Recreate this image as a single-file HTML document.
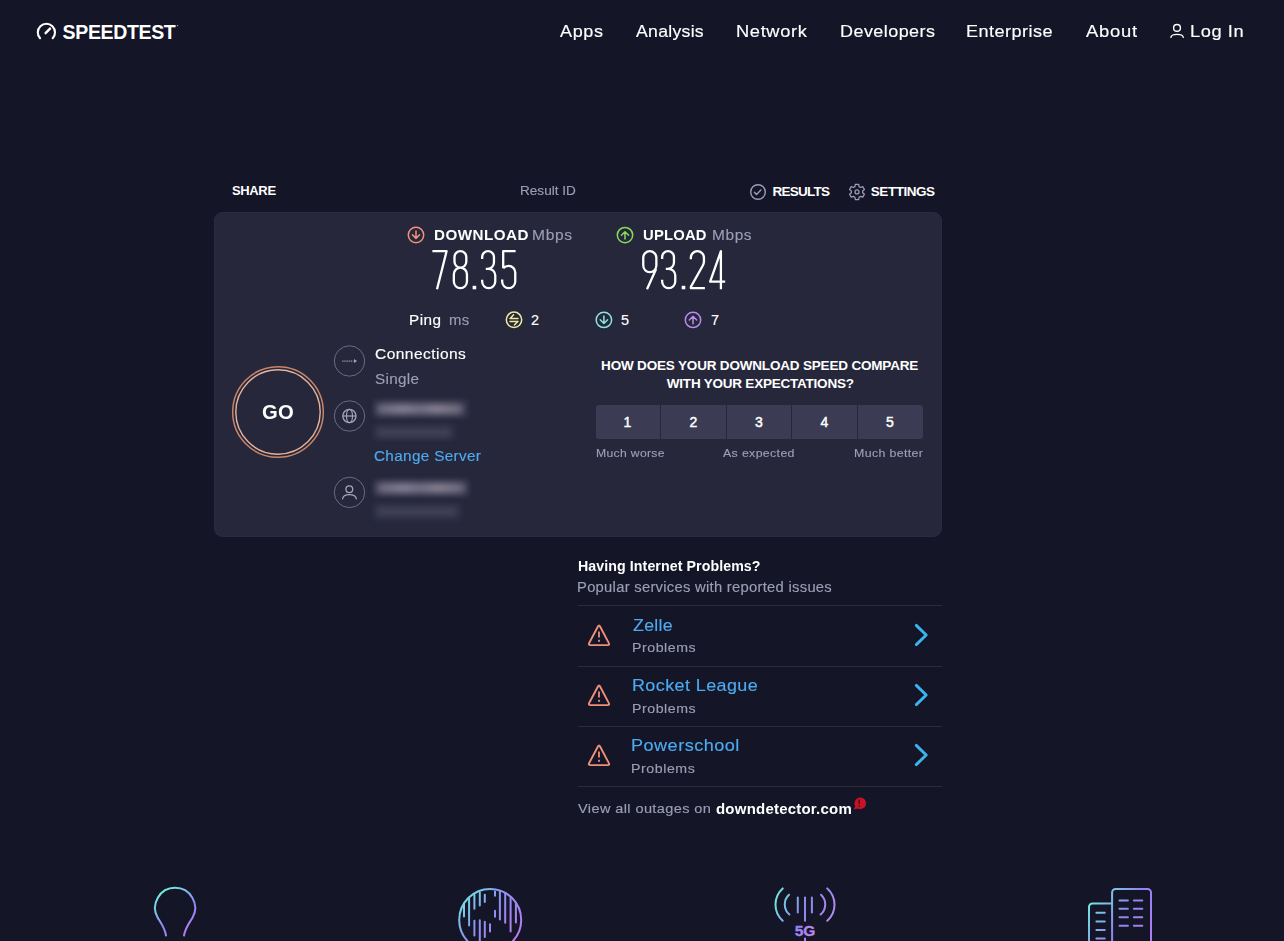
<!DOCTYPE html>
<html><head><meta charset="utf-8">
<style>
html,body{margin:0;padding:0}
body{width:1284px;height:941px;overflow:hidden;background:#141526;position:relative;font-family:"Liberation Sans",sans-serif}
.t{position:absolute;white-space:nowrap}
.t.r{-webkit-text-stroke:0.15px currentColor}
.card{position:absolute;left:214px;top:212px;width:728px;height:325px;border-radius:9px;background:#26273b;box-shadow:inset 0 0 0 1px #2a2b40}
.rate{position:absolute;left:596px;top:405px;width:327px;height:34px;border-radius:3px;background:#3b3c53;overflow:hidden}
.rate i{position:absolute;top:0;width:1px;height:34px;background:#26273b}
.hl{position:absolute;left:578px;width:364px;height:1px;background:#2b2c40}
.blur{position:absolute;filter:blur(2.6px);white-space:nowrap}
svg{position:absolute;left:0;top:0}
</style></head><body>
<div class="card"></div>
<div class="rate"><i style="left:64px"></i><i style="left:130px"></i><i style="left:195px"></i><i style="left:261px"></i></div>
<div class="hl" style="top:605px"></div>
<div class="hl" style="top:666px"></div>
<div class="hl" style="top:726px"></div>
<div class="hl" style="top:786px"></div>
<div class="blur" style="left:373px;top:399px;width:96px;height:19px;background:#2f2f45;filter:blur(2px)"></div>
<div class="blur" style="left:377px;top:404px;width:86px;height:10px;background:linear-gradient(90deg,#6e6b80,#8a8599 30%,#76748a 50%,#8e8696 70%,#6e6b80);filter:blur(3.5px)"></div>
<div class="blur" style="left:373px;top:423px;width:83px;height:17px;background:#2c2d42;filter:blur(2px)"></div>
<div class="blur" style="left:377px;top:428px;width:74px;height:9px;background:#414257;filter:blur(3px)"></div>
<div class="blur" style="left:373px;top:479px;width:97px;height:18px;background:#2f2f45;filter:blur(2px)"></div>
<div class="blur" style="left:377px;top:483px;width:88px;height:10px;background:linear-gradient(90deg,#6e6b80,#8a8599 30%,#76748a 50%,#8e8696 70%,#6e6b80);filter:blur(3.5px)"></div>
<div class="blur" style="left:373px;top:502px;width:89px;height:19px;background:#2c2d42;filter:blur(2px)"></div>
<div class="blur" style="left:377px;top:507px;width:80px;height:9px;background:#414257;filter:blur(3px)"></div>
<div class="t" style="left:62.6px;top:23.0px;font-size:19.5px;line-height:19.5px;font-weight:bold;color:#ffffff;letter-spacing:-0.35px;transform:scaleX(1.0000);transform-origin:0 0">SPEEDTEST</div>
<div class="t r" style="left:559.5px;top:23.0px;font-size:17px;line-height:17px;font-weight:normal;color:#ffffff;letter-spacing:0.60px;transform:scaleX(1.0611);transform-origin:0 0">Apps</div>
<div class="t r" style="left:635.8px;top:23.0px;font-size:17px;line-height:17px;font-weight:normal;color:#ffffff;letter-spacing:0.27px;transform:scaleX(1.0385);transform-origin:0 0">Analysis</div>
<div class="t r" style="left:735.6px;top:23.0px;font-size:17px;line-height:17px;font-weight:normal;color:#ffffff;letter-spacing:0.59px;transform:scaleX(1.0752);transform-origin:0 0">Network</div>
<div class="t r" style="left:839.5px;top:23.0px;font-size:17px;line-height:17px;font-weight:normal;color:#ffffff;letter-spacing:0.42px;transform:scaleX(1.0580);transform-origin:0 0">Developers</div>
<div class="t r" style="left:966.3px;top:23.0px;font-size:17px;line-height:17px;font-weight:normal;color:#ffffff;letter-spacing:0.42px;transform:scaleX(1.0642);transform-origin:0 0">Enterprise</div>
<div class="t r" style="left:1085.6px;top:23.0px;font-size:17px;line-height:17px;font-weight:normal;color:#ffffff;letter-spacing:0.70px;transform:scaleX(1.0824);transform-origin:0 0">About</div>
<div class="t r" style="left:1189.9px;top:23.0px;font-size:17px;line-height:17px;font-weight:normal;color:#ffffff;letter-spacing:0.52px;transform:scaleX(1.0743);transform-origin:0 0">Log In</div>
<div class="t" style="left:232.0px;top:184.0px;font-size:13px;line-height:13px;font-weight:bold;color:#ffffff;letter-spacing:-0.36px;transform:scaleX(1.0000);transform-origin:0 0">SHARE</div>
<div class="t r" style="left:519.8px;top:184.0px;font-size:13.5px;line-height:13.5px;font-weight:normal;color:#9c9eb5;letter-spacing:0.02px;transform:scaleX(1.0043);transform-origin:0 0">Result ID</div>
<div class="t" style="left:772.6px;top:185.0px;font-size:13.5px;line-height:13.5px;font-weight:bold;color:#ffffff;letter-spacing:-0.78px;transform:scaleX(1.0000);transform-origin:0 0">RESULTS</div>
<div class="t" style="left:870.8px;top:185.0px;font-size:13.5px;line-height:13.5px;font-weight:bold;color:#ffffff;letter-spacing:-0.46px;transform:scaleX(1.0000);transform-origin:0 0">SETTINGS</div>
<div class="t" style="left:434.0px;top:228.0px;font-size:14.5px;line-height:14.5px;font-weight:bold;color:#ffffff;letter-spacing:0.45px;transform:scaleX(1.0470);transform-origin:0 0">DOWNLOAD</div>
<div class="t r" style="left:532.4px;top:228.0px;font-size:14.5px;line-height:14.5px;font-weight:normal;color:#9c9eb5;letter-spacing:0.63px;transform:scaleX(1.0722);transform-origin:0 0">Mbps</div>
<div class="t" style="left:643.0px;top:228.0px;font-size:14.5px;line-height:14.5px;font-weight:bold;color:#ffffff;letter-spacing:0.20px;transform:scaleX(1.0204);transform-origin:0 0">UPLOAD</div>
<div class="t r" style="left:711.5px;top:228.0px;font-size:14.5px;line-height:14.5px;font-weight:normal;color:#9c9eb5;letter-spacing:0.56px;transform:scaleX(1.0642);transform-origin:0 0">Mbps</div>
<div class="t r" style="left:408.6px;top:313.0px;font-size:14.5px;line-height:14.5px;font-weight:normal;color:#ffffff;letter-spacing:0.40px;transform:scaleX(1.0559);transform-origin:0 0">Ping</div>
<div class="t r" style="left:448.6px;top:313.0px;font-size:14.5px;line-height:14.5px;font-weight:normal;color:#9c9eb5;letter-spacing:0.36px;transform:scaleX(1.0237);transform-origin:0 0">ms</div>
<div class="t r" style="left:531.0px;top:313.0px;font-size:14.5px;line-height:14.5px;font-weight:normal;color:#ffffff;letter-spacing:0.00px;transform:scaleX(1.0000);transform-origin:0 0">2</div>
<div class="t r" style="left:621.0px;top:313.0px;font-size:14.5px;line-height:14.5px;font-weight:normal;color:#ffffff;letter-spacing:0.00px;transform:scaleX(1.0000);transform-origin:0 0">5</div>
<div class="t r" style="left:711.0px;top:313.0px;font-size:14.5px;line-height:14.5px;font-weight:normal;color:#ffffff;letter-spacing:0.00px;transform:scaleX(1.0000);transform-origin:0 0">7</div>
<div class="t" style="left:262.4px;top:402.0px;font-size:20px;line-height:20px;font-weight:bold;color:#ffffff;letter-spacing:0.29px;transform:scaleX(1.0116);transform-origin:0 0">GO</div>
<div class="t r" style="left:374.6px;top:347.0px;font-size:14.5px;line-height:14.5px;font-weight:normal;color:#ffffff;letter-spacing:0.43px;transform:scaleX(1.0701);transform-origin:0 0">Connections</div>
<div class="t r" style="left:374.6px;top:372.0px;font-size:14.5px;line-height:14.5px;font-weight:normal;color:#9c9eb5;letter-spacing:0.31px;transform:scaleX(1.0500);transform-origin:0 0">Single</div>
<div class="t r" style="left:373.9px;top:449.0px;font-size:14.5px;line-height:14.5px;font-weight:normal;color:#4daaf0;letter-spacing:0.33px;transform:scaleX(1.0529);transform-origin:0 0">Change Server</div>
<div class="t" style="left:601.1px;top:359.0px;font-size:13.5px;line-height:13.5px;font-weight:bold;color:#ffffff;letter-spacing:-0.18px;transform:scaleX(1.0000);transform-origin:0 0">HOW DOES YOUR DOWNLOAD SPEED COMPARE</div>
<div class="t" style="left:666.8px;top:377.0px;font-size:13.5px;line-height:13.5px;font-weight:bold;color:#ffffff;letter-spacing:-0.22px;transform:scaleX(1.0000);transform-origin:0 0">WITH YOUR EXPECTATIONS?</div>
<div class="t r" style="left:596.0px;top:448.0px;font-size:11.5px;line-height:11.5px;font-weight:normal;color:#9c9eb5;letter-spacing:0.31px;transform:scaleX(1.0581);transform-origin:0 0">Much worse</div>
<div class="t r" style="left:723.4px;top:448.0px;font-size:11.5px;line-height:11.5px;font-weight:normal;color:#9c9eb5;letter-spacing:0.34px;transform:scaleX(1.0718);transform-origin:0 0">As expected</div>
<div class="t r" style="left:853.7px;top:448.0px;font-size:11.5px;line-height:11.5px;font-weight:normal;color:#9c9eb5;letter-spacing:0.34px;transform:scaleX(1.0741);transform-origin:0 0">Much better</div>
<div class="t" style="left:578.1px;top:559.0px;font-size:14px;line-height:14px;font-weight:bold;color:#ffffff;letter-spacing:0.08px;transform:scaleX(1.0136);transform-origin:0 0">Having Internet Problems?</div>
<div class="t r" style="left:576.9px;top:580.0px;font-size:14px;line-height:14px;font-weight:normal;color:#9c9eb5;letter-spacing:0.27px;transform:scaleX(1.0544);transform-origin:0 0">Popular services with reported issues</div>
<div class="t r" style="left:632.6px;top:617.0px;font-size:17px;line-height:17px;font-weight:normal;color:#4daaf0;letter-spacing:0.30px;transform:scaleX(1.0424);transform-origin:0 0">Zelle</div>
<div class="t r" style="left:631.5px;top:641.0px;font-size:13px;line-height:13px;font-weight:normal;color:#9c9eb5;letter-spacing:0.51px;transform:scaleX(1.0879);transform-origin:0 0">Problems</div>
<div class="t r" style="left:631.5px;top:677.0px;font-size:17px;line-height:17px;font-weight:normal;color:#4daaf0;letter-spacing:0.40px;transform:scaleX(1.0550);transform-origin:0 0">Rocket League</div>
<div class="t r" style="left:631.5px;top:702.0px;font-size:13px;line-height:13px;font-weight:normal;color:#9c9eb5;letter-spacing:0.51px;transform:scaleX(1.0879);transform-origin:0 0">Problems</div>
<div class="t r" style="left:631.4px;top:737.0px;font-size:17px;line-height:17px;font-weight:normal;color:#4daaf0;letter-spacing:0.46px;transform:scaleX(1.0625);transform-origin:0 0">Powerschool</div>
<div class="t r" style="left:631.4px;top:762.0px;font-size:13px;line-height:13px;font-weight:normal;color:#9c9eb5;letter-spacing:0.52px;transform:scaleX(1.0899);transform-origin:0 0">Problems</div>
<div class="t r" style="left:578.0px;top:802.0px;font-size:13.5px;line-height:13.5px;font-weight:normal;color:#9c9eb5;letter-spacing:0.37px;transform:scaleX(1.0760);transform-origin:0 0">View all outages on</div>
<div class="t" style="left:716.2px;top:802.0px;font-size:14.5px;line-height:14.5px;font-weight:bold;color:#ffffff;letter-spacing:0.22px;transform:scaleX(1.0328);transform-origin:0 0">downdetector.com</div>
<div class="t" style="left:623.5px;top:415px;font-size:14px;line-height:14px;font-weight:normal;color:#fff;-webkit-text-stroke:0.45px #fff">1</div>
<div class="t" style="left:689.5px;top:415px;font-size:14px;line-height:14px;font-weight:normal;color:#fff;-webkit-text-stroke:0.45px #fff">2</div>
<div class="t" style="left:755.0px;top:415px;font-size:14px;line-height:14px;font-weight:normal;color:#fff;-webkit-text-stroke:0.45px #fff">3</div>
<div class="t" style="left:820.5px;top:415px;font-size:14px;line-height:14px;font-weight:normal;color:#fff;-webkit-text-stroke:0.45px #fff">4</div>
<div class="t" style="left:886.0px;top:415px;font-size:14px;line-height:14px;font-weight:normal;color:#fff;-webkit-text-stroke:0.45px #fff">5</div>
<svg width="1284" height="941" viewBox="0 0 1284 941" fill="none">
<defs>
<linearGradient id="g1" x1="0.2" y1="0.05" x2="0.8" y2="1"><stop offset="0" stop-color="#70f0e0"/><stop offset="0.55" stop-color="#8e8cf0"/><stop offset="1" stop-color="#b27cf2"/></linearGradient>
<linearGradient id="go" x1="0" y1="0" x2="0" y2="1"><stop offset="0" stop-color="#e7a27c"/><stop offset="1" stop-color="#d8876a"/></linearGradient>
<linearGradient id="g1b" gradientUnits="userSpaceOnUse" x1="462" y1="892" x2="518" y2="935"><stop offset="0" stop-color="#70f0e0"/><stop offset="0.45" stop-color="#8a92f0"/><stop offset="1" stop-color="#b67cf2"/></linearGradient>
<linearGradient id="g5" gradientUnits="userSpaceOnUse" x1="775" y1="890" x2="835" y2="920"><stop offset="0" stop-color="#6ff0e0"/><stop offset="0.5" stop-color="#8a88ee"/><stop offset="1" stop-color="#b88af0"/></linearGradient>
<linearGradient id="g5t" gradientUnits="userSpaceOnUse" x1="794" y1="925" x2="816" y2="936"><stop offset="0" stop-color="#8f7ff0"/><stop offset="1" stop-color="#c48cf0"/></linearGradient>
<linearGradient id="gb" gradientUnits="userSpaceOnUse" x1="1088" y1="900" x2="1152" y2="941"><stop offset="0" stop-color="#6ff0e0"/><stop offset="0.5" stop-color="#8f86f0"/><stop offset="1" stop-color="#b27cf2"/></linearGradient>
</defs>
<!-- logo -->
<path d="M40.08,38.23 A8.6,8.6 0 1 1 52.72,38.23" stroke="#fff" stroke-width="2.1" stroke-linecap="round"/>
<circle cx="177.6" cy="25.6" r="0.7" fill="#bbb"/>
<path d="M45.6,33.2 L50,28.6" stroke="#fff" stroke-width="2.4" stroke-linecap="round"/>
<!-- nav user -->
<circle cx="1177" cy="27.9" r="3.4" stroke="#fff" stroke-width="1.4"/>
<path d="M1170.9,37.3 Q1171.3,34.4 1177,34.4 Q1182.7,34.4 1183.3,37.3" stroke="#fff" stroke-width="1.4" stroke-linecap="round"/>
<!-- results / settings -->
<circle cx="758" cy="192" r="7.3" stroke="#9d9eb4" stroke-width="1.4"/>
<path d="M754.4,192.3 L756.5,194.4 L760.9,189.9" stroke="#9d9eb4" stroke-width="1.4" stroke-linecap="round" stroke-linejoin="round"/>
<path d="M854.15,186.96 L854.96,186.58 L855.31,184.28 L858.69,184.28 L859.04,186.58 L859.85,186.96 L860.59,187.47 L862.75,186.63 L864.44,189.55 L862.63,191.01 L862.70,191.90 L862.63,192.79 L864.44,194.25 L862.75,197.17 L860.59,196.33 L859.85,196.84 L859.04,197.22 L858.69,199.52 L855.31,199.52 L854.96,197.22 L854.15,196.84 L853.41,196.33 L851.25,197.17 L849.56,194.25 L851.37,192.79 L851.30,191.90 L851.37,191.01 L849.56,189.55 L851.25,186.63 L853.41,187.47Z" stroke="#9d9eb4" stroke-width="1.25" stroke-linejoin="round"/>
<circle cx="857" cy="191.9" r="2" stroke="#9d9eb4" stroke-width="1.25"/>
<!-- download / upload icons -->
<circle cx="416" cy="235" r="7.7" stroke="#f0927c" stroke-width="1.5"/>
<path d="M416,231 V238.3 M412.4,234.8 L416,238.4 L419.6,234.8" stroke="#f0927c" stroke-width="1.5" stroke-linecap="round" stroke-linejoin="round"/>
<circle cx="625" cy="235.1" r="7.7" stroke="#87dc5a" stroke-width="1.5"/>
<path d="M625,239.1 V231.8 M621.4,235.3 L625,231.7 L628.6,235.3" stroke="#87dc5a" stroke-width="1.5" stroke-linecap="round" stroke-linejoin="round"/>
<!-- ping icons -->
<circle cx="514" cy="319.8" r="7.7" stroke="#ecea9c" stroke-width="1.5"/>
<path d="M510,318.4 H518 M510.2,318.4 L513.6,314.8 M510,321.4 H518 M517.8,321.4 L514.4,325" stroke="#ecea9c" stroke-width="1.5" stroke-linecap="round" stroke-linejoin="round"/>
<circle cx="603.9" cy="319.9" r="7.7" stroke="#8ae6df" stroke-width="1.5"/>
<path d="M603.9,316 V323.5 M600.2,319.8 L603.9,323.5 L607.6,319.8" stroke="#8ae6df" stroke-width="1.5" stroke-linecap="round" stroke-linejoin="round"/>
<circle cx="693" cy="319.9" r="7.7" stroke="#b98cee" stroke-width="1.5"/>
<path d="M693,323.8 V316.3 M689.3,320 L693,316.3 L696.7,320" stroke="#b98cee" stroke-width="1.5" stroke-linecap="round" stroke-linejoin="round"/>
<!-- GO ring -->
<circle cx="278" cy="412" r="45.3" stroke="#c98569" stroke-width="1.5"/>
<circle cx="278" cy="412" r="42.2" stroke="#e6b39a" stroke-width="1.4"/>
<!-- side icons -->
<circle cx="349.5" cy="361" r="15.2" stroke="#6b6c82" stroke-width="1"/>
<path d="M342.3,361.1 H353.4" stroke="#a4a5b8" stroke-width="1.3" stroke-dasharray="1.2 0.9"/>
<path d="M354,359 L357,361 L354,363 Z" fill="#a4a5b8"/>
<circle cx="349.5" cy="416" r="15.2" stroke="#6b6c82" stroke-width="1"/>
<circle cx="349.4" cy="416" r="6.6" stroke="#a4a5b8" stroke-width="1.3"/>
<ellipse cx="349.5" cy="416" rx="3" ry="6.6" stroke="#a4a5b8" stroke-width="1.2"/>
<path d="M342.8,416 H356" stroke="#a4a5b8" stroke-width="1.2"/>
<circle cx="349.5" cy="492.4" r="15.2" stroke="#6b6c82" stroke-width="1"/>
<circle cx="349.3" cy="489.2" r="3.4" stroke="#a4a5b8" stroke-width="1.3"/>
<path d="M342.6,498.8 Q343,494.6 349.4,494.6 Q355.8,494.6 356.3,498.8" stroke="#a4a5b8" stroke-width="1.3" stroke-linecap="round"/>
<!-- digits 78.35 -->
<g stroke="#fff" stroke-width="2.3" stroke-linejoin="round">
<g transform="translate(432.4,250)"><path d="M0,1.15 H14.2 L4.6,39.3"/></g>
<g transform="translate(452.7,250)"><path d="M7.7,1.15 A5.9,5.9 0 0 1 13.6,7.05 V11.8 A5.9,5.9 0 0 1 7.7,17.7 A5.9,5.9 0 0 1 1.8,11.8 V7.05 A5.9,5.9 0 0 1 7.7,1.15 Z M7.7,17.7 A6.55,6.55 0 0 1 14.25,24.25 V31.6 A6.55,6.55 0 0 1 1.15,31.6 V24.25 A6.55,6.55 0 0 1 7.7,17.7 Z"/></g>
<g transform="translate(481,250)"><path d="M1.15,9 V7.05 A5.9,5.9 0 0 1 12.95,7.05 V12.6 A6.2,6.2 0 0 1 6.75,18.8 H4.8 M6.75,18.8 H7.7 A6.55,6.55 0 0 1 14.25,25.35 V31.6 A6.55,6.55 0 0 1 1.15,31.6 V29.8"/></g>
<g transform="translate(501,250)"><path d="M14.6,1.15 H2.2 V18.2 M2.2,18.2 C3.4,16.8 5.2,15.9 7.7,15.9 A6.55,6.55 0 0 1 14.25,22.45 V31.6 A6.55,6.55 0 0 1 1.15,31.6 V29.6"/></g>
</g>
<rect x="472.6" y="285.8" width="3.6" height="3.5" fill="#fff"/>
<!-- digits 93.24 -->
<g stroke="#fff" stroke-width="2.3" stroke-linejoin="round">
<g transform="translate(642.1,250)"><path d="M7.7,1.15 A6.55,6.55 0 0 1 14.25,7.7 V15.6 A6.55,6.55 0 0 1 1.15,15.6 V7.7 A6.55,6.55 0 0 1 7.7,1.15 Z M14,19 L4.9,39.3"/></g>
<g transform="translate(661,250)"><path d="M1.15,9 V7.05 A5.9,5.9 0 0 1 12.95,7.05 V12.6 A6.2,6.2 0 0 1 6.75,18.8 H4.8 M6.75,18.8 H7.7 A6.55,6.55 0 0 1 14.25,25.35 V31.6 A6.55,6.55 0 0 1 1.15,31.6 V29.8"/></g>
<g transform="translate(689.7,250)"><path d="M1.15,9.2 V7.7 A6.55,6.55 0 0 1 14.25,7.7 V11.6 Q14.25,13.6 13,15.8 L1.15,36.9 V38.15 H15.2"/></g>
<g transform="translate(709,250)"><path d="M11.9,39.3 V1.15 L1.15,31.65 H16.2"/></g>
</g>
<rect x="681.7" y="285.8" width="3.6" height="3.5" fill="#fff"/>
<!-- warnings + chevrons -->
<g id="warn"><path d="M597.92,626.53 Q599.00,624.50 600.08,626.53 L608.82,643.07 Q609.90,645.10 607.60,645.10 L590.40,645.10 Q588.10,645.10 589.18,643.07 Z" stroke="#ee8f78" stroke-width="1.9" stroke-linejoin="round"/>
<path d="M599,631.6 V637.6" stroke="#ee8f78" stroke-width="1.8"/><rect x="598.1" y="639.8" width="1.8" height="2" fill="#ee8f78"/></g>
<use href="#warn" y="60"/><use href="#warn" y="120"/>
<g id="chev"><path d="M916.3,625.4 L926.2,635 L916.3,644.6" stroke="#3ab5f0" stroke-width="2.9" stroke-linecap="round" stroke-linejoin="round"/></g>
<use href="#chev" y="60"/><use href="#chev" y="120"/>
<!-- downdetector badge -->
<path d="M853.6,809.6 L855.3,806.2 A5.8,5.8 0 1 1 857.8,808.5 Z" fill="#c81228"/>
<path d="M859.2,799.6 V804" stroke="#5c0a14" stroke-width="1.6"/><rect x="858.4" y="805.2" width="1.6" height="1.5" fill="#5c0a14"/>
<!-- bottom icons -->
<g stroke="url(#g1)" stroke-width="2" stroke-linecap="round" fill="none">
<path d="M166,935.5 C164.8,927.5 160.5,922.5 157.6,917.5 A20,20 0 1 1 192.6,917.5 C189.7,922.5 185.4,927.5 184,935.5"/>
</g>
<g stroke="url(#g1b)" stroke-width="2" stroke-linecap="round" fill="none">
<circle cx="490.2" cy="920" r="31"/>
<path d="M464,903.4 V916.5 M469.1,898.7 V925.5 M474.4,894.7 V908.8 M474.4,920.8 V935.6 M479.8,892.4 V905.4 M479.8,920.2 V945 M484.8,894.7 V902.1 M484.8,921.8 V936.9 M490,924.2 V931.5 M495,891.4 V895.7 M495,910.8 V916.8 M499.9,891 V919.5 M505.2,893 V922.8 M510.6,897 V931.5 M515.9,902.8 V922.5"/>
</g>
<g stroke="url(#g5)" stroke-width="2" stroke-linecap="round" fill="none">
<path d="M782.7,888.4 A21.8,21.8 0 0 0 782.7,920.8 M789,894.7 A13.3,13.3 0 0 0 789.4,914.5 M797.8,897.4 V912.5 M805,897.4 V920.8 M811.9,897.4 V912.5 M821,894.7 A13.3,13.3 0 0 1 820.6,914.5 M827.3,888.4 A21.8,21.8 0 0 1 827.3,920.8 M805,938.5 V945"/>
</g>
<text x="805" y="935.6" text-anchor="middle" font-family="Liberation Sans" font-weight="bold" font-size="15.5" fill="url(#g5t)" stroke="url(#g5t)" stroke-width="0.3">5G</text>
<g stroke="url(#gb)" stroke-width="2" stroke-linecap="round" fill="none"><path d="M1112.1,945 V892.5 A3.5,3.5 0 0 1 1115.6,889 H1147.5 A3.5,3.5 0 0 1 1151,892.5 V945 M1089,945 V906.9 A3.5,3.5 0 0 1 1092.5,903.4 H1111"/><path d="M1119.5,900.4 H1127.9 M1133.9,900.4 H1142.3 M1119.5,908.8 H1127.9 M1133.9,908.8 H1142.3 M1119.5,917.2 H1127.9 M1133.9,917.2 H1142.3 M1119.5,925.7 H1127.9 M1133.9,925.7 H1142.3 M1096.4,912.8 H1104.8 M1096.4,921.5 H1104.8 M1096.4,929.9 H1104.8 M1096.4,938.6 H1104.8"/></g>

</svg>
</body></html>
